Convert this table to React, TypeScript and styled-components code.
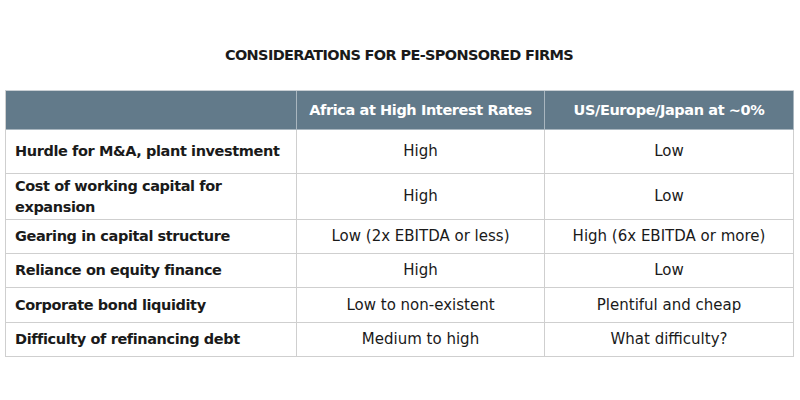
import React from "react";
import styled, { createGlobalStyle } from "styled-components";

const Global = createGlobalStyle`
  html, body { margin: 0; padding: 0; background: #ffffff; }
  body { width: 800px; height: 400px; overflow: hidden; font-family: "DejaVu Sans", Verdana, sans-serif; }
`;

const Page = styled.div`
  width: 800px;
  height: 400px;
  display: flex;
  flex-direction: column;
  align-items: flex-start;
  padding: 0 0 0 5px;
  box-sizing: border-box;
`;

const Title = styled.h1`
  margin: 46px 0 0 0;
  width: 788px;
  text-align: center;
  font-size: 14.5px;
  font-weight: bold;
  color: #1a1a1a;
  line-height: 18px;
  letter-spacing: -0.65px;
`;

const Grid = styled.div`
  margin-top: 26px;
  display: grid;
  grid-template-columns: 291px 248px 249px;
  grid-template-rows: 39px 44px 46px 34px 34px 35px 34px;
  border-top: 1px solid #c9cfd4;
  border-left: 1px solid #cfcfcf;
  box-sizing: border-box;
  width: 789px;
`;

const Cell = styled.div<{ $head?: boolean; $label?: boolean }>`
  display: flex;
  align-items: center;
  justify-content: ${(p) => (p.$label ? "flex-start" : "center")};
  text-align: ${(p) => (p.$label ? "left" : "center")};
  padding: ${(p) => (p.$label ? "0 4px 0 9px" : "0 4px")};
  box-sizing: border-box;
  border-right: 1px solid ${(p) => (p.$head ? "#a9b6bf" : "#cfcfcf")};
  border-bottom: 1px solid ${(p) => (p.$head ? "#a9b6bf" : "#cfcfcf")};
  background: ${(p) => (p.$head ? "#627a8a" : "#ffffff")};
  color: ${(p) => (p.$head ? "#ffffff" : "#1a1a1a")};
  font-size: ${(p) => (p.$head || p.$label ? "14.5px" : "15px")};
  line-height: 21px;
  font-weight: ${(p) => (p.$head || p.$label ? "bold" : "normal")};
  letter-spacing: ${(p) => (p.$head || p.$label ? "-0.4px" : "0")};
`;

const rows: [string, string, string][] = [
  ["Hurdle for M&A, plant investment", "High", "Low"],
  ["Cost of working capital for expansion", "High", "Low"],
  ["Gearing in capital structure", "Low (2x EBITDA or less)", "High (6x EBITDA or more)"],
  ["Reliance on equity finance", "High", "Low"],
  ["Corporate bond liquidity", "Low to non-existent", "Plentiful and cheap"],
  ["Difficulty of refinancing debt", "Medium to high", "What difficulty?"],
];

export default function App() {
  return (
    <>
      <Global />
      <Page>
        <Title>CONSIDERATIONS FOR PE-SPONSORED FIRMS</Title>
        <Grid>
          <Cell $head />
          <Cell $head>Africa at High Interest Rates</Cell>
          <Cell $head>US/Europe/Japan at ~0%</Cell>
          {rows.map((r) => (
            <React.Fragment key={r[0]}>
              <Cell $label>{r[0]}</Cell>
              <Cell>{r[1]}</Cell>
              <Cell>{r[2]}</Cell>
            </React.Fragment>
          ))}
        </Grid>
      </Page>
    </>
  );
}
